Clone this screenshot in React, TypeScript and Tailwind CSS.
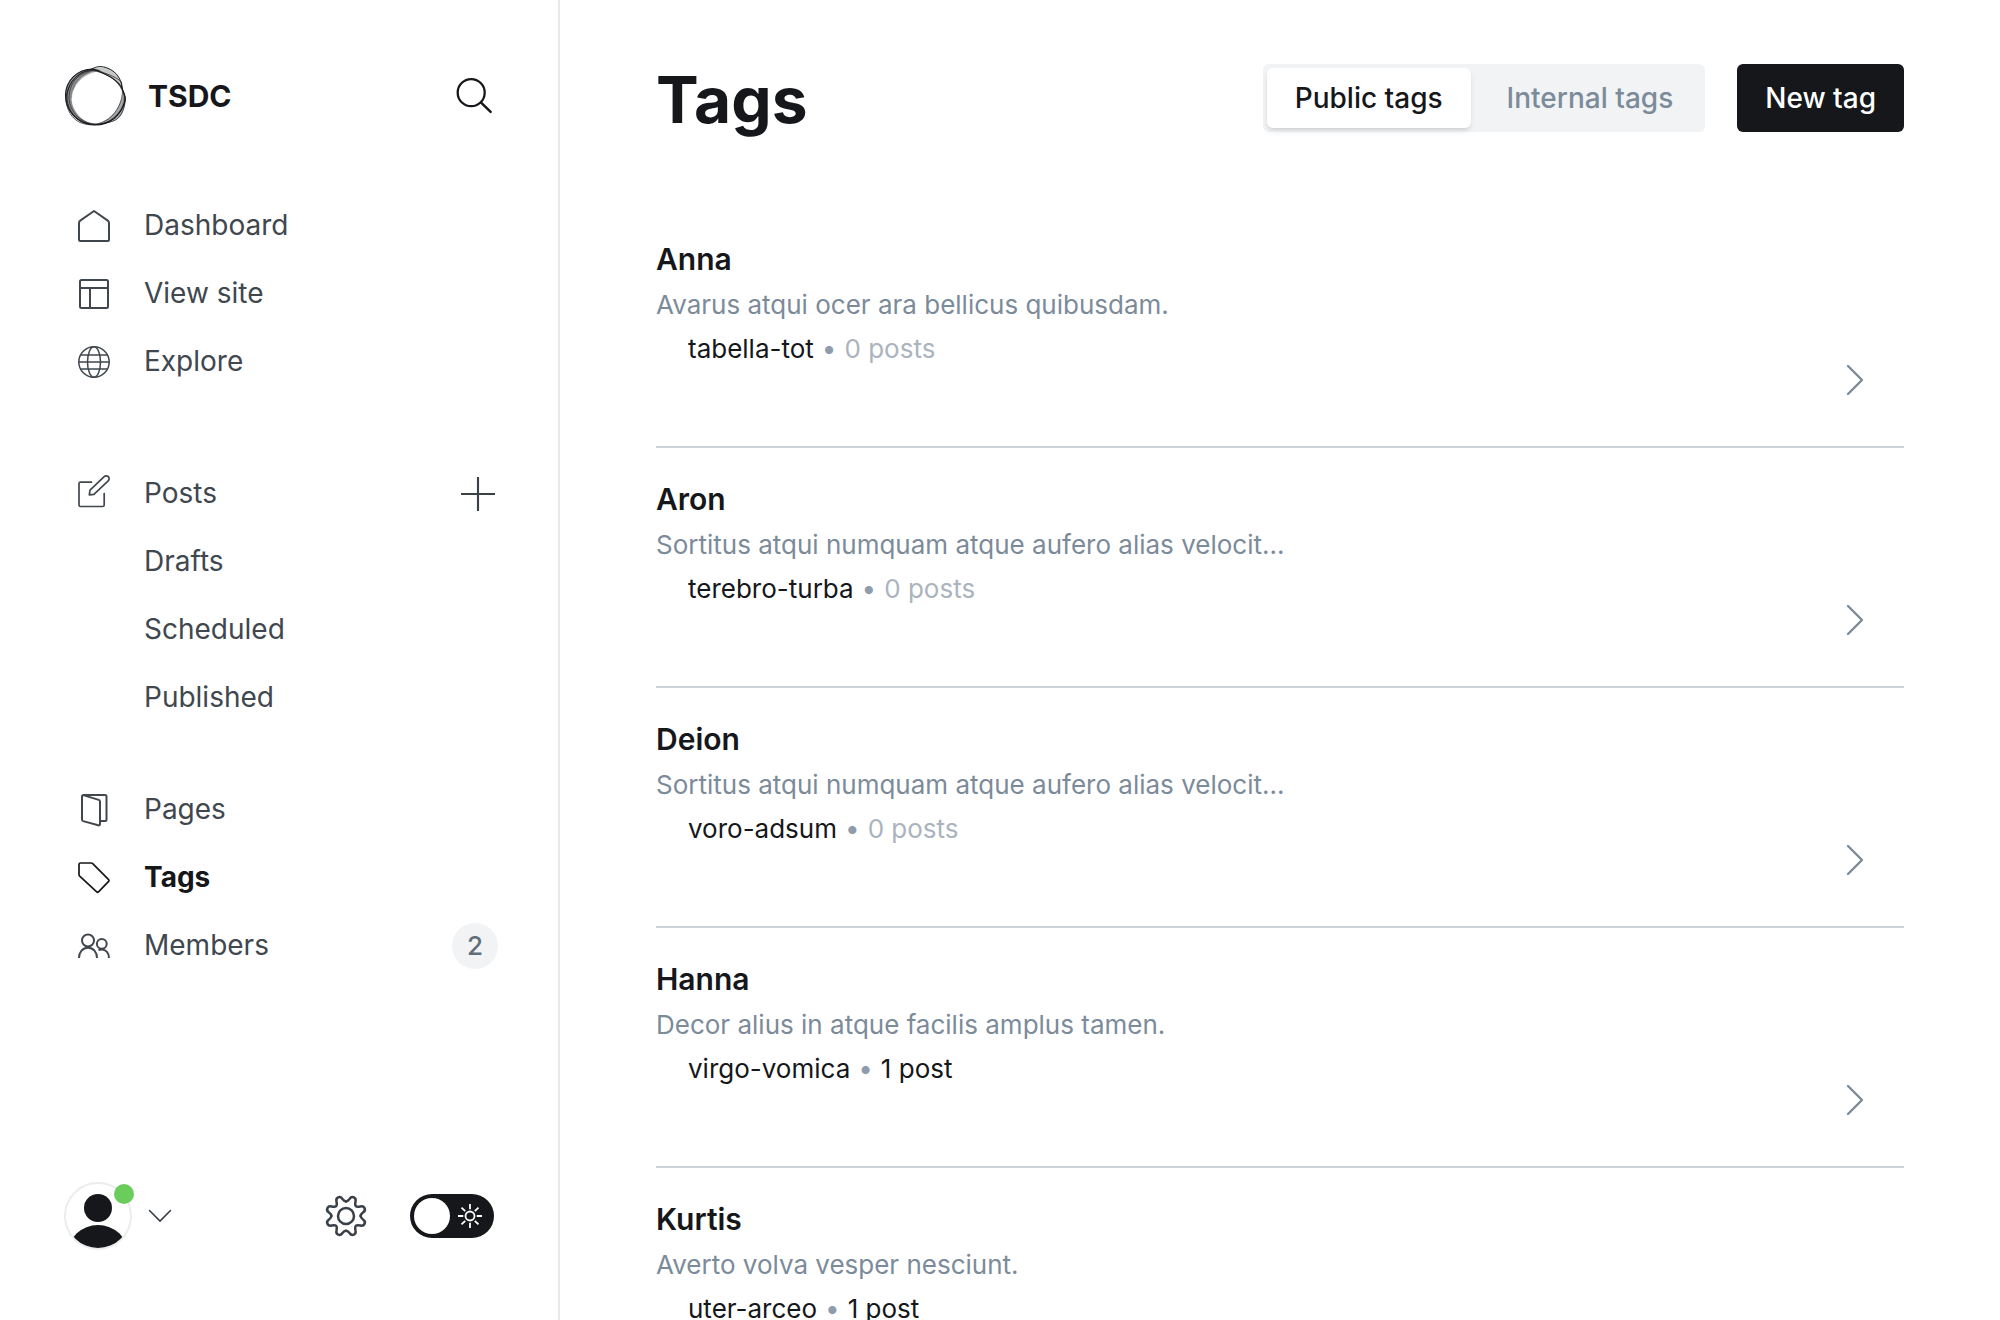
import React from "react";

type Tag = { name: string; description: string; slug: string; posts: number };

const tags: Tag[] = [
  { name: "Anna", description: "Avarus atqui ocer ara bellicus quibusdam.", slug: "tabella-tot", posts: 0 },
  { name: "Aron", description: "Sortitus atqui numquam atque aufero alias velocit...", slug: "terebro-turba", posts: 0 },
  { name: "Deion", description: "Sortitus atqui numquam atque aufero alias velocit...", slug: "voro-adsum", posts: 0 },
  { name: "Hanna", description: "Decor alius in atque facilis amplus tamen.", slug: "virgo-vomica", posts: 1 },
  { name: "Kurtis", description: "Averto volva vesper nesciunt.", slug: "uter-arceo", posts: 1 },
];

function Icon({ children, className = "size-8" }: { children: React.ReactNode; className?: string }) {
  return (
    <svg
      viewBox="0 0 32 32"
      className={`shrink-0 overflow-visible ${className}`}
      fill="none"
      stroke="currentColor"
      strokeWidth="2"
      strokeLinecap="round"
      strokeLinejoin="round"
      aria-hidden="true"
    >
      {children}
    </svg>
  );
}

const HomeIcon = () => (
  <Icon>
    <path d="M16 1 2.2 10.6Q1 11.5 1 13v16.500Q1 31 2.500 31h27Q31 31 31 29.500V13q0-1.500-1.200-2.400Z" />
  </Icon>
);

const LayoutIcon = () => (
  <Icon>
    <rect x="2" y="2" width="28" height="28" rx="1.500" />
    <path d="M2 10h28M12 10v20" />
  </Icon>
);

const GlobeIcon = () => (
  <Icon>
    <g strokeWidth="1.500">
      <circle cx="16" cy="16" r="15.200" />
      <ellipse cx="16" cy="16" rx="6.500" ry="15.200" />
      <path d="M1 16h30M2.800 9h26.400M2.800 23h26.400" />
    </g>
  </Icon>
);

const EditIcon = () => (
  <Icon>
    <g strokeWidth="1.700">
      <path d="M13.500 4.200H2.500Q1 4.200 1 5.700v21.300Q1 28.500 2.500 28.500h22.200q1.500 0 1.500-1.500V15.500" />
      <path d="m11.300 16.900.7-4.700L26.200-1.400a2.900 2.900 0 0 1 4 4.200L15.900 16.300Z" />
    </g>
  </Icon>
);

const PagesIcon = () => (
  <Icon>
    <path d="M22.500 27H27q1.500 0 1.500-1.500v-23Q28.500 1 27 1H5.500" />
    <path d="M4 2.500v23q0 1.200 1.200 1.600l15 4.200q1.800.5 1.800-1.200V7.500q0-1.200-1.200-1.600L6 1.400Q4 .8 4 2.500Z" />
  </Icon>
);

const TagIcon = () => (
  <Icon>
    <g strokeWidth="1.700">
      <path d="M1 2.500Q1 1 2.500 1H13q1 0 1.700.7L30.400 17.300q1.200 1.200 0 2.400L20.500 29.800q-.9.900-1.800 0L1.700 14.200Q1 13.500 1 12.500Z" />
    </g>
  </Icon>
);

const MembersIcon = () => (
  <Icon>
    <circle cx="10" cy="10.500" r="6" />
    <circle cx="23.800" cy="13.800" r="4.900" />
    <path strokeLinecap="butt" d="M1 28c0-6 3.700-10.200 9-10.200s9 4.200 9 10.200M20.500 20.200c.9-.4 2-.6 3.200-.6 4.300 0 7.300 3.400 7.300 8.400" />
  </Icon>
);

const GearIcon = () => (
  <Icon className="size-10">
    <circle cx="16" cy="16" r="6.400" />
    {[0, 90, 180, 270].map((angle) => (
      <path
        key={angle}
        transform={`rotate(${angle} 16 16) translate(16 16)`}
        d="M0-11.700C1.200-11.700 2-12.400 3-13.800 3.900-15.200 5.500-15.300 6.600-14.700 7.800-14 7.900-12.800 7.600-11.600 7.300-10 7-8.600 7.900-7.900 8.600-7 10-7.300 11.600-7.600 12.800-7.900 14-7.800 14.700-6.600 15.300-5.500 15.200-3.900 13.800-3 12.400-2 11.700-1.200 11.700 0"
      />
    ))}
  </Icon>
);

function Logo() {
  return (
    <svg viewBox="0 0 64 64" className="size-16 shrink-0" fill="none" stroke="#15171a" strokeLinejoin="round" aria-hidden="true">
      <g fill="#15171a" stroke="none">
        <path fillOpacity=".5" d="M30 4.500C14 5 2 15 1.500 32 1.500 48 14 61 32 61 20 59 8 49 7.500 34 8 20 18 9 36 6Z" />
        <path fillOpacity=".24" d="M25 5.500C31 2 40 2 46 5 54 9 58 16 58.700 27 57 20 52 15 45 11.500 38 9 32 6.500 25 5.500Z" />
        <path fillOpacity=".38" d="M58.700 26C62 31 62.500 37 60.500 43 59 51 54 56 47 58 42 60 37 61 31 60.500 42 57.500 50 51 54 43 57 37 58.500 33 58.700 26Z" />
      </g>
      <path strokeWidth="1.100" d="M29 5C13 5.500 2 16 1.500 31 1.500 46 13 61 31 61 46 61 57 51 61 37 62 32 60 29 58.700 26 55 16 44 11 29 5Z" />
      <path strokeWidth=".8" d="M27 5.500C13 9 3 19 3 34 4 49 15 60 32 60.300 42 60 50 56 54 50 61 43 63 34 58.700 27 58 14 51 5 38 2.500 34 2 30 3.500 27 5.500Z" />
      <path strokeWidth=".7" d="M2 37C3 46 8 55 16 58.500 23 61 28 61 37 60.300 42 58 51 59 56 52 60 46 61 41 61 35 60 29 57 24 57.500 18 50 11 41 10 36 7 30 5 24 6 17 9 8 15 2 25 2 37Z" />
      <path strokeWidth=".6" d="M5 34C5 20 13 10 27 6.500 42 8 53 15 58.500 27 58 43 47 58 32 60 17 59 6 49 5 34Z" />
      <path strokeWidth=".5" strokeOpacity=".6" d="M7.500 34C8 20 20 9 36 6.500M9 26C13 14 22 8 32 5.500M40 3C50 5 57 13 58 24M60 33C60 44 53 54 42 58" />
    </svg>
  );
}

function NavLink({
  label,
  icon,
  active = false,
  children,
}: {
  label: string;
  icon?: React.ReactNode;
  active?: boolean;
  children?: React.ReactNode;
}) {
  return (
    <li className="flex h-[68px] items-center">
      <a
        href="#"
        aria-current={active ? "page" : undefined}
        className={`flex flex-1 items-center gap-[34px] ${active ? "font-bold text-[#15171a]" : "text-[#40474e]"}`}
      >
        <span className="size-8">{icon}</span>
        <span className="pb-0.5">{label}</span>
      </a>
      {children}
    </li>
  );
}

function Sidebar() {
  return (
    <aside className="flex w-[560px] shrink-0 flex-col border-r-2 border-[#e6e8ea] pt-16 pb-[70px] pl-16">
      <div className="flex h-16 items-center justify-between pr-[66px]">
        <a href="#" className="flex items-center gap-5 text-[30px] font-bold text-[#15171a]">
          <Logo />
          TSDC
        </a>
        <button type="button" aria-label="Search" className="text-[#15171a]">
          <Icon className="size-9">
            <circle cx="13.500" cy="13" r="12" />
            <path strokeWidth="2.200" d="m22.300 21.800 8.500 8.400" />
          </Icon>
        </button>
      </div>

      <nav aria-label="Main" className="mt-16 flex flex-col pr-[60px] pl-3.5 text-[28px] leading-9">
        <ul>
          <NavLink label="Dashboard" icon={<HomeIcon />} />
          <NavLink label="View site" icon={<LayoutIcon />} />
          <NavLink label="Explore" icon={<GlobeIcon />} />
        </ul>
        <ul className="mt-16">
          <NavLink label="Posts" icon={<EditIcon />}>
            <button type="button" aria-label="New post" className="mr-[3px] text-[#394047]">
              <Icon className="size-[34px]">
                <path strokeLinecap="butt" d="M16 0v32M0 16h32" />
              </Icon>
            </button>
          </NavLink>
          <NavLink label="Drafts" />
          <NavLink label="Scheduled" />
          <NavLink label="Published" />
        </ul>
        <ul className="mt-11">
          <NavLink label="Pages" icon={<PagesIcon />} />
          <NavLink label="Tags" icon={<TagIcon />} active />
          <NavLink label="Members" icon={<MembersIcon />}>
            <span className="flex size-[46px] items-center justify-center rounded-full bg-[#f1f3f4] text-[26px] font-medium text-[#626d79]">
              2
            </span>
          </NavLink>
        </ul>
      </nav>

      <div className="mt-auto flex items-center pr-16">
        <button type="button" aria-label="Account" className="flex items-center gap-3 text-[#394047]">
          <svg viewBox="0 0 72 68" className="h-[68px] w-[72px]" aria-hidden="true">
            <clipPath id="avatar-clip">
              <circle cx="34" cy="34" r="32" />
            </clipPath>
            <circle cx="34" cy="34" r="33" fill="#fff" stroke="#ebeced" strokeWidth="2" />
            <circle cx="34" cy="26" r="14" fill="#15171a" />
            <ellipse cx="34" cy="71" rx="30" ry="28" fill="#15171a" clipPath="url(#avatar-clip)" />
            <circle cx="60" cy="12" r="10" fill="#6acd5b" />
          </svg>
          <svg viewBox="0 0 24 14" className="h-3.5 w-6" fill="none" stroke="currentColor" strokeWidth="1.600" strokeLinecap="round" aria-hidden="true">
            <path d="m1.500 1.500 10.500 10.500L22.500 1.500" />
          </svg>
        </button>
        <button type="button" aria-label="Settings" className="ml-auto text-[#394047]">
          <GearIcon />
        </button>
        <button
          type="button"
          role="switch"
          aria-checked="false"
          aria-label="Night shift"
          className="ml-11 flex h-11 w-[84px] items-center justify-between rounded-full bg-[#15171a] pr-3 pl-1 text-white"
        >
          <span className="size-9 rounded-full bg-white" />
          <Icon className="size-6">
            <g strokeWidth="2.400" strokeLinecap="butt">
              <circle cx="16" cy="16" r="6" />
              <path d="M16 0v7M16 25v7M0 16h7M25 16h7M4.700 4.700l4.900 4.900M22.400 22.400l4.900 4.900M4.700 27.300l4.900-4.900M22.400 9.600l4.900-4.900" />
            </g>
          </Icon>
        </button>
      </div>
    </aside>
  );
}

function TagRow({ tag }: { tag: Tag }) {
  return (
    <li className="flex h-60 shrink-0 items-start justify-between border-b-2 border-[#ced4d9] pt-[31px] text-[26px] leading-9">
      <a href="#" className="flex flex-col">
        <h3 className="text-[30px] leading-10 font-semibold text-[#15171a]">{tag.name}</h3>
        <p className="mt-2 text-[#7c8b9a]">{tag.description}</p>
        <p className="mt-2 flex gap-2 pl-8 text-[#15171a]">
          <span>{tag.slug}</span>
          <span className="text-[#8e9cac]">•</span>
          <span className={tag.posts ? "" : "text-[#abb4be]"}>
            {tag.posts} {tag.posts === 1 ? "post" : "posts"}
          </span>
        </p>
      </a>
      <a href="#" aria-label={`Edit ${tag.name}`} className="mt-[125px] mr-10 text-[#7c8b9a]">
        <svg viewBox="0 0 18 32" className="h-8 w-[18px]" fill="none" stroke="currentColor" strokeWidth="2.400" strokeLinecap="round" strokeLinejoin="round" aria-hidden="true">
          <path d="m2 2 14 14L2 30" />
        </svg>
      </a>
    </li>
  );
}

export default function App() {
  return (
    <div className="flex h-screen overflow-hidden bg-white font-['Inter',sans-serif] text-[#15171a] antialiased [font-optical-sizing:none]">
      <Sidebar />
      <main className="flex min-w-0 flex-1 flex-col overflow-y-auto px-24 pt-16 [scrollbar-width:none]">
        <header className="flex h-[68px] shrink-0 items-center justify-between">
          <h1 className="pt-1 text-[64px] leading-[68px] font-bold">Tags</h1>
          <div className="flex gap-8 text-[28px] font-medium">
            <div className="flex h-[68px] items-stretch rounded-md bg-[#f1f3f4] p-1">
              <button type="button" aria-pressed="true" className="rounded-md bg-white px-7 shadow-md">
                Public tags
              </button>
              <button type="button" aria-pressed="false" className="pr-7 pl-9 text-[#7c8b9a]">
                Internal tags
              </button>
            </div>
            <button type="button" className="h-[68px] rounded-md bg-[#15171a] px-7 text-white">
              New tag
            </button>
          </div>
        </header>
        <ul className="mt-[76px] flex flex-col">
          {tags.map((tag) => (
            <TagRow key={tag.name} tag={tag} />
          ))}
        </ul>
      </main>
    </div>
  );
}
